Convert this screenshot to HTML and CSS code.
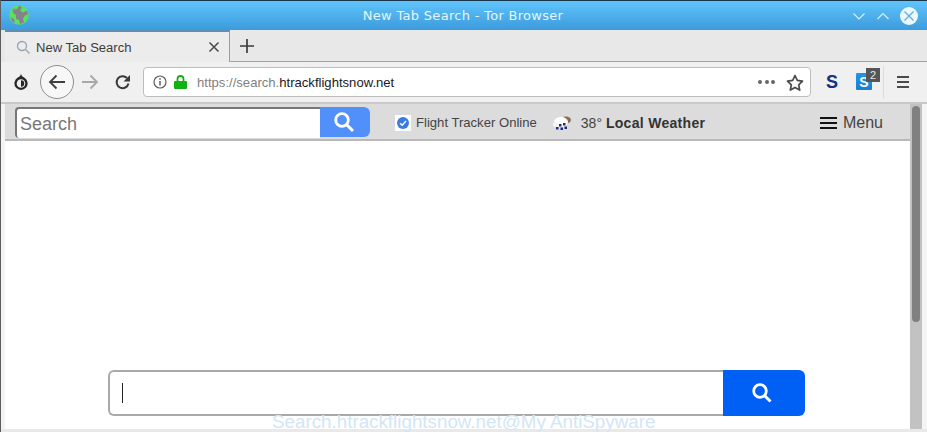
FILE: index.html
```html
<!DOCTYPE html>
<html lang="en">
<head>
<meta charset="utf-8">
<title>New Tab Search - Tor Browser</title>
<link rel="stylesheet" href="styles.css">
</head>
<body>
<div class="window">
  <header class="titlebar">
    <svg class="globe" width="20" height="20" viewBox="0 0 20 20"><circle cx="10" cy="10" r="9.800" fill="#5ce060"/><path d="M10 .5l3 2-2 3 3 2 4-2 1 4-3 1-2 3 1 4-4 1.500-1-4-3-1V10L4 8l1-3 3-1zM2 12l3 2 1 4-3-2z" fill="#86828c"/><path d="M3 5l3-2 1 2-3 2z" fill="#8a8a90"/></svg>
    <div class="title">New Tab Search - Tor Browser</div>
    <div class="wincontrols">
      <svg width="14" height="14" viewBox="0 0 14 14"><path d="M1.500 4.500l5.500 5.500 5.500-5.500" fill="none" stroke="#d6efff" stroke-width="1.200"/></svg>
      <svg width="14" height="14" viewBox="0 0 14 14"><path d="M1.500 10l5.500-5.500 5.500 5.500" fill="none" stroke="#d6efff" stroke-width="1.200"/></svg>
      <svg width="18" height="18" viewBox="0 0 18 18"><circle cx="9" cy="9" r="9" fill="#eef7fd"/><path d="M4.500 4.500l9 9M13.500 4.500l-9 9" stroke="#5aaee6" stroke-width="1.300"/></svg>
    </div>
  </header>

  <div class="tabbar">
    <div class="tab">
      <svg width="15" height="15" viewBox="0 0 15 15"><circle cx="6" cy="6" r="4.500" fill="none" stroke="#8fa6bb" stroke-width="1.300"/><path d="M9.500 9.500l4 4" stroke="#a9a9a9" stroke-width="1.600"/></svg>
      <span class="tab-label">New Tab Search</span>
      <svg class="tab-close" width="12" height="12" viewBox="0 0 12 12"><path d="M1.500 1.500l9 9M10.500 1.500l-9 9" stroke="#4a4a4a" stroke-width="1.500"/></svg>
    </div>
    <div class="newtab">
      <svg width="16" height="16" viewBox="0 0 16 16"><path d="M8 1v14M1 8h14" stroke="#3d3d3d" stroke-width="1.700"/></svg>
    </div>
  </div>

  <nav class="toolbar">
    <svg class="onion" width="16" height="18" viewBox="0 0 16 18"><path d="M8 .5c.2 2 1.200 3 3.200 4.100a6.600 6.600 0 1 1-6.400 0C6.800 3.500 7.800 2.500 8 .5z" fill="#262626"/><circle cx="8" cy="10.500" r="4.300" fill="#f0f0f0"/><path d="M8 7.300a3.200 3.200 0 0 1 0 6.400z" fill="#262626"/></svg>
    <div class="back">
      <svg width="18" height="16" viewBox="0 0 18 16"><path d="M17 8H2M8.500 1.500L2 8l6.500 6.500" fill="none" stroke="#3f3f3f" stroke-width="1.800"/></svg>
    </div>
    <svg class="forward" width="18" height="16" viewBox="0 0 18 16"><path d="M1 8h15M9.500 1.500L16 8l-6.500 6.500" fill="none" stroke="#a8a8a8" stroke-width="1.800"/></svg>
    <svg class="reload" width="16" height="16" viewBox="0 0 16 16"><path d="M13.500 9.500A6 6 0 1 1 12 4" fill="none" stroke="#3a3a3a" stroke-width="2"/><path d="M15 1v6.500H8.500z" fill="#3a3a3a"/></svg>
    <div class="urlbar">
      <svg width="14" height="14" viewBox="0 0 14 14"><circle cx="7" cy="7" r="6" fill="none" stroke="#5c5c5c" stroke-width="1.200"/><path d="M7 6v4.500M7 3.200v1.600" stroke="#5c5c5c" stroke-width="1.500"/></svg>
      <svg class="lock" width="13" height="14" viewBox="0 0 13 14"><path d="M3.500 6V4a3 3 0 0 1 6 0v2" fill="none" stroke="#12b012" stroke-width="1.800"/><rect y="6" width="13" height="8" rx="1" fill="#12b012"/></svg>
      <span class="url"><span class="url-dim">https://search.</span>htrackflightsnow.net</span>
      <span class="dots"><i></i><i></i><i></i></span>
      <svg width="18" height="17" viewBox="0 0 18 17"><path d="M9 1.500l2.300 4.900 5.200.7-3.800 3.700 1 5.300L9 13.400l-4.700 2.700 1-5.300L1.500 7.100l5.200-.7z" fill="none" stroke="#4a4a4a" stroke-width="1.700" stroke-linejoin="round"/></svg>
    </div>
    <span class="ext-s">S</span>
    <div class="ext-badge">
      <span class="ext-tile">S</span>
      <span class="ext-count">2</span>
    </div>
    <div class="divider"></div>
    <div class="burger burger-gray"><i></i><i></i><i></i></div>
  </nav>

  <div class="viewport">
    <main class="page">
      <div class="pagebar">
        <div class="mini-search">
          <input class="mini-input" type="text" placeholder="Search" aria-label="Search">
          <button class="mini-btn" aria-label="Search">
            <svg width="22" height="22" viewBox="0 0 22 22"><circle cx="9" cy="9" r="6.300" fill="none" stroke="#fff" stroke-width="2.800"/><path d="M13.500 13.500l6.500 6.500" stroke="#fff" stroke-width="3"/></svg>
          </button>
        </div>
        <div class="flight">
          <span class="flight-icon"><svg width="12" height="12" viewBox="0 0 12 12"><circle cx="6" cy="6" r="6" fill="#3a7be0"/><path d="M3 6.300l2.200 2L9 4" fill="none" stroke="#fff" stroke-width="1.400"/></svg></span>
          <span>Flight Tracker Online</span>
        </div>
        <div class="weather">
          <svg width="18" height="16" viewBox="0 0 18 16"><ellipse cx="13" cy="5" rx="5" ry="3.500" fill="#8a6a56"/><ellipse cx="8" cy="7" rx="7" ry="5" fill="#fff"/><ellipse cx="3" cy="9.500" rx="3" ry="2.500" fill="#f4f4f8"/><path d="M6 9h2.500v2.500H6zM10 8h2.500v2.500H10zM3 12h2.500v2.500H3zM7.500 12.500H10V15H7.500zM11.500 11.500H14V14h-2.500z" fill="#1c2a80"/></svg>
          <span>38° <b>Local Weather</b></span>
        </div>
        <div class="menu">
          <div class="burger burger-black"><i></i><i></i><i></i></div>
          <span>Menu</span>
        </div>
      </div>
      <div class="page-body">
        <div class="main-search">
          <div class="main-input"><span class="caret"></span></div>
          <button class="main-btn" aria-label="Search">
            <svg width="22" height="22" viewBox="0 0 22 22"><circle cx="9" cy="9" r="6.300" fill="none" stroke="#fff" stroke-width="2.800"/><path d="M13.500 13.500l6 6" stroke="#fff" stroke-width="3"/></svg>
          </button>
        </div>
      </div>
    </main>
    <div class="scrollbar"><div class="thumb"></div></div>
  </div>
  <div class="bottom-strip"></div>
  <div class="watermark">Search.htrackflightsnow.net@My AntiSpyware</div>
</div>
</body>
</html>
```

FILE: styles.css
```css
* { box-sizing: border-box; }
html, body { margin: 0; height: 100%; overflow: hidden; }
body { font-family: "Liberation Sans", Arial, sans-serif; background: #fff; }

.window { position: relative; width: 927px; height: 432px; display: flex; flex-direction: column; background: #f0f0f0; border-left: 1px solid #5d5d5d; overflow: hidden; }

.titlebar { height: 30px; flex: none; display: flex; align-items: center; padding: 0 10px 0 8px; border-top: 1px solid #16344a; background: linear-gradient(#60c4fb, #3c9bdc); }
.globe { flex: none; margin-top: -1px; }
.title { flex: 1; text-align: center; color: #e4f4ff; font: 13px "DejaVu Sans", sans-serif; letter-spacing: .3px; margin-left: 45px; }
.wincontrols { display: flex; align-items: center; gap: 10px; margin-right: -1px; }

.tabbar { height: 32px; flex: none; display: flex; background: #e8e8e8; padding-left: 4px; }
.tab { width: 225px; display: flex; align-items: center; padding: 0 10px 0 11px; border-top: 2px solid #5e8eb4; border-right: 1px solid #9d9d9d; background: #ececec; }
.tab-label { flex: 1; margin-left: 5px; font-size: 13.050px; color: #3c3c3c; }
.tab-close { flex: none; margin-right: -1px; }
.newtab { flex: 1; display: flex; align-items: center; padding-left: 9px; border-bottom: 1px solid #a3a3a3; }

.toolbar { height: 42px; flex: none; display: flex; align-items: center; background: #f0f0f0; padding: 0 16px 0 12px; border-bottom: 2px solid #c8c8c8; }
.onion { flex: none; }
.back { width: 34px; height: 34px; margin-left: 11px; border: 1px solid #8e8e8e; border-radius: 50%; background: #f7f7f7; display: flex; align-items: center; justify-content: center; flex: none; }
.forward { margin-left: 7px; flex: none; }
.reload { margin-left: 16px; flex: none; }
.urlbar { width: 668px; height: 30px; margin-left: 12px; display: flex; align-items: center; padding: 0 6px 0 9px; background: #fff; border: 1px solid #bdbdbd; border-radius: 4px; flex: none; }
.lock { margin-left: 7px; }
.url { flex: 1; margin-left: 10px; font-size: 13.100px; color: #1a1a1a; }
.url-dim { color: #7f7f7f; }
.dots { display: flex; gap: 2.500px; margin-right: 11px; }
.dots i { width: 4px; height: 4px; border-radius: 50%; background: #666; }
.ext-s { margin-left: 15px; width: 12px; font: 700 18px/1 "Liberation Sans", sans-serif; color: #12337f; }
.ext-badge { position: relative; width: 24px; height: 26px; margin-left: 18px; }
.ext-tile { position: absolute; left: 0; top: 5px; width: 16px; height: 16px; border-radius: 1px; background: linear-gradient(#1f94ea, #1a80cf); box-shadow: 0 -1px 0 #1f94ea; color: #fff; font: 700 14px/16px "Liberation Sans", sans-serif; text-align: center; }
.ext-count { position: absolute; left: 10px; top: -1px; width: 14px; height: 14px; background: #555; color: #e8e8e8; font-size: 11px; line-height: 14px; text-align: center; }
.divider { width: 1px; height: 32px; margin-left: 3px; background: #dcdcdc; }
.burger { display: flex; flex-direction: column; justify-content: space-between; }
.burger i { display: block; }
.burger-gray { width: 12px; height: 12px; margin-left: 13px; }
.burger-gray i { height: 2px; background: #4a4a4a; }

.viewport { flex: 1; display: flex; padding-left: 4px; padding-right: 5px; min-height: 0; background: #f4f4f4; }
.page { flex: 1; display: flex; flex-direction: column; background: #fff; min-width: 0; }
.pagebar { height: 37px; flex: none; display: flex; align-items: center; padding: 2px 0 0 10px; background: #dcdcdc; border-bottom: 2px solid #b9b9b9; }
.mini-search { display: flex; width: 355px; height: 31px; }
.mini-input { width: 305px; height: 31px; padding: 2px 0 0 3px; border: 0; border-left: 2px solid #777; border-top: 2px solid #777; border-radius: 4px 0 0 4px; background: #fff; font: 18px "Liberation Sans", Arial, sans-serif; color: #333; outline: 0; }
.mini-input::placeholder { color: #777; opacity: 1; }
.mini-btn { width: 50px; height: 30px; padding: 0 2px 0 0; border: 0; border-radius: 0 6px 6px 0; background: #5190fb; display: flex; align-items: center; justify-content: center; }
.flight { display: flex; align-items: center; gap: 5px; margin-left: 25px; font-size: 13.100px; color: #444; }
.flight-icon { width: 16px; height: 16px; display: flex; align-items: center; justify-content: center; background: #fff; }
.weather { display: flex; align-items: center; gap: 10px; margin-left: 16px; font-size: 14px; color: #444; }
.weather b { letter-spacing: .3px; color: #333; }
.menu { margin-left: auto; margin-right: 27px; display: flex; align-items: center; gap: 6px; font-size: 16px; color: #444; }
.burger-black { width: 17px; height: 12px; }
.burger-black i { height: 2px; background: #111; }

.page-body { flex: 1; display: flex; align-items: flex-start; padding: 229px 0 0 103px; background: #fff; }
.main-search { width: 697px; height: 46px; display: flex; }
.main-input { flex: 1; display: flex; align-items: center; padding-left: 12px; border: 2px solid #a9a9a9; border-right: 0; border-radius: 6px 0 0 6px; background: #fff; }
.caret { width: 1px; height: 20px; background: #222; }
.main-btn { width: 82px; padding: 0 4px 0 0; border: 0; border-radius: 0 6px 6px 0; background: #0060f6; display: flex; align-items: center; justify-content: center; }

.scrollbar { width: 12px; flex: none; background: #c2c2c2; padding: 2px 2px 0; }
.thumb { width: 8px; height: 216px; border-radius: 4px; background: #808080; }

.bottom-strip { height: 3px; flex: none; background: #e9e9e9; }
.watermark { position: absolute; left: 271px; top: 411px; font-size: 18.800px; line-height: 21px; color: #d2e6f6; white-space: nowrap; }
```
